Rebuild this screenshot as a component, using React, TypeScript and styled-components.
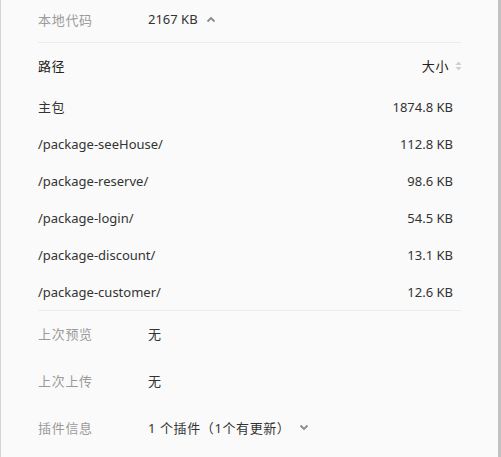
import React from "react";
import styled, { createGlobalStyle } from "styled-components";

const Global = createGlobalStyle`
  html, body { margin: 0; padding: 0; background: #fafafa; }
  body {
    font-family: "Noto Sans", "Noto Sans CJK SC", sans-serif;
    font-size: 13px;
    color: #333;
  }
`;

const Frame = styled.div`
  width: 501px;
  height: 457px;
  box-sizing: border-box;
  background: #fafafa;
  border-left: 1px solid #d4d4d4;
  border-right: 3px solid #c2c2c2;
  overflow: hidden;
`;

const Content = styled.div`
  margin-left: 37px;
  width: 423px;
  display: flex;
  flex-direction: column;
`;

const InfoRow = styled.div<{ $h: number }>`
  display: flex;
  align-items: center;
  box-sizing: border-box;
  height: ${(p) => p.$h}px;
  padding-bottom: 2px;
`;

const Label = styled.div`
  width: 110px;
  color: #9a9a9a;
  flex: none;
  letter-spacing: 0.7px;
`;

const Value = styled.div<{ $gap?: number }>`
  display: flex;
  align-items: center;
  gap: ${(p) => p.$gap ?? 8}px;
  color: #333;
`;

const Cjk = styled.span`
  letter-spacing: 0.6px;
`;

const Divider = styled.div<{ $mt?: number }>`
  height: 1px;
  background: #ececec;
  margin-top: ${(p) => p.$mt ?? 0}px;
`;

const Table = styled.div`
  display: flex;
  flex-direction: column;
  padding-right: 8px;
`;

const HeadRow = styled.div`
  display: flex;
  align-items: center;
  justify-content: space-between;
  height: 45px;
  color: #222;
`;

const Row = styled.div`
  display: flex;
  align-items: center;
  justify-content: space-between;
  height: 37px;
  color: #333;
`;

const SizeHead = styled.div`
  display: flex;
  align-items: center;
  gap: 6px;
  margin-right: -9px;
  letter-spacing: 0.6px;
`;

const Chevron = ({ up }: { up?: boolean }) => (
  <svg width="10" height="7" viewBox="0 0 10 7" style={{ display: "block" }}>
    <path
      d={up ? "M1.5 5.5 L5 2 L8.5 5.5" : "M1.5 1.5 L5 5 L8.5 1.5"}
      fill="none"
      stroke="#8a8a8a"
      strokeWidth="1.8"
    />
  </svg>
);

const SortIcon = () => (
  <svg width="7" height="10" viewBox="0 0 7 10" style={{ display: "block" }}>
    <path d="M3.5 0.5 L6.5 4 L0.5 4 Z" fill="#cfcfcf" />
    <path d="M3.5 9.5 L6.5 6 L0.5 6 Z" fill="#cfcfcf" />
  </svg>
);

const packages: [string, string][] = [
  ["主包", "1874.8 KB"],
  ["/package-seeHouse/", "112.8 KB"],
  ["/package-reserve/", "98.6 KB"],
  ["/package-login/", "54.5 KB"],
  ["/package-discount/", "13.1 KB"],
  ["/package-customer/", "12.6 KB"],
];

export default function App() {
  return (
    <Frame>
      <Global />
      <Content>
        <InfoRow $h={40}>
          <Label>本地代码</Label>
          <Value>
            2167 KB <Chevron up />
          </Value>
        </InfoRow>
        <Divider $mt={2} />
        <Table>
          <HeadRow>
            <Cjk>路径</Cjk>
            <SizeHead>
              大小 <SortIcon />
            </SizeHead>
          </HeadRow>
          {packages.map(([name, size]) => (
            <Row key={name}>
              {name === "主包" ? <Cjk>{name}</Cjk> : <span>{name}</span>}
              <span>{size}</span>
            </Row>
          ))}
        </Table>
        <Divider />
        <InfoRow $h={47}>
          <Label>上次预览</Label>
          <Value>无</Value>
        </InfoRow>
        <InfoRow $h={47}>
          <Label>上次上传</Label>
          <Value>无</Value>
        </InfoRow>
        <InfoRow $h={47}>
          <Label>插件信息</Label>
          <Value $gap={9}>
            <Cjk>1 个插件（1个有更新）</Cjk>
            <Chevron />
          </Value>
        </InfoRow>
      </Content>
    </Frame>
  );
}
